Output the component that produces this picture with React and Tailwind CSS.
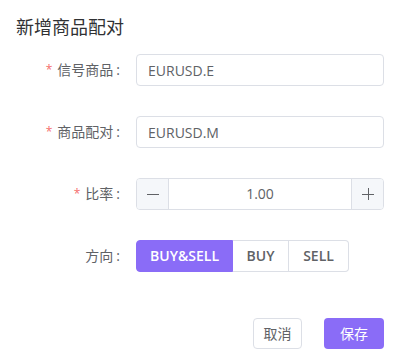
import React, { useState } from "react";

const font = { fontFamily: '"Open Sans", "Noto Sans CJK SC", sans-serif' };

const Label = ({ required, children }) => (
  <div className="w-[136px] pr-4 flex justify-end items-center text-sm text-[#606266]">
    {required && <span className="text-[#f56c6c] mr-[5px] text-xs">*</span>}
    {children}
    <span className="pl-[3px]">:</span>
  </div>
);

export default function App() {
  const [dir, setDir] = useState("BUY&SELL");

  return (
    <div className="w-[395px] h-[363px] bg-white flex flex-col" style={font}>
      {/* Title */}
      <div className="px-4 pt-[13px] text-lg text-[#303133] leading-[28px]">新增商品配对</div>

      {/* Form */}
      <div className="flex flex-col gap-[30px] pt-[13px] pr-[11px]">
        <div className="flex items-center">
          <Label required>信号商品</Label>
          <input
            defaultValue="EURUSD.E"
            className="flex-1 h-8 border border-[#dcdfe6] rounded px-[11px] text-sm text-[#606266] outline-none"
          />
        </div>

        <div className="flex items-center">
          <Label required>商品配对</Label>
          <input
            defaultValue="EURUSD.M"
            className="flex-1 h-8 border border-[#dcdfe6] rounded px-[11px] text-sm text-[#606266] outline-none"
          />
        </div>

        <div className="flex items-center">
          <Label required>比率</Label>
          <div className="flex-1 h-8 flex border border-[#dcdfe6] rounded overflow-hidden text-sm text-[#606266]">
            <button className="w-8 bg-[#f5f7fa] border-r border-[#dcdfe6] flex items-center justify-center">
              <svg width="12" height="12" viewBox="0 0 12 12">
                <path d="M0 6.5h12" stroke="#606266" strokeWidth="1" />
              </svg>
            </button>
            <div className="flex-1 flex items-center justify-center">1.00</div>
            <button className="w-8 bg-[#f5f7fa] border-l border-[#dcdfe6] flex items-center justify-center">
              <svg width="12" height="12" viewBox="0 0 12 12">
                <path d="M0 6.5h12M6.5 0v12" stroke="#606266" strokeWidth="1" />
              </svg>
            </button>
          </div>
        </div>

        <div className="flex items-center">
          <Label>方向</Label>
          <div className="flex h-8 text-sm">
            {["BUY&SELL", "BUY", "SELL"].map((d, i) => (
              <button
                key={d}
                onClick={() => setDir(d)}
                className={
                  (dir === d
                    ? "bg-[#8a6cf7] text-white border-[#8a6cf7] font-semibold "
                    : "bg-white text-[#606266] border-[#dcdfe6] font-semibold ") +
                  (i === 0 ? "rounded-l w-[97px] " : "") +
                  (i === 1 ? "w-[56px] " : "") +
                  (i === 2 ? "rounded-r w-[60px] " : "") +
                  (i > 0 ? "border-l-0 " : "") +
                  "border"
                }
              >
                {d}
              </button>
            ))}
          </div>
        </div>
      </div>

      {/* Footer */}
      <div className="flex justify-end gap-[22px] pr-[11px] pt-[46px]">
        <button className="w-[49px] h-[31px] border border-[#dcdfe6] rounded text-sm text-[#606266] bg-white">
          取消
        </button>
        <button className="w-[60px] h-[31px] rounded text-sm text-white bg-[#8a6cf7]">保存</button>
      </div>
    </div>
  );
}
